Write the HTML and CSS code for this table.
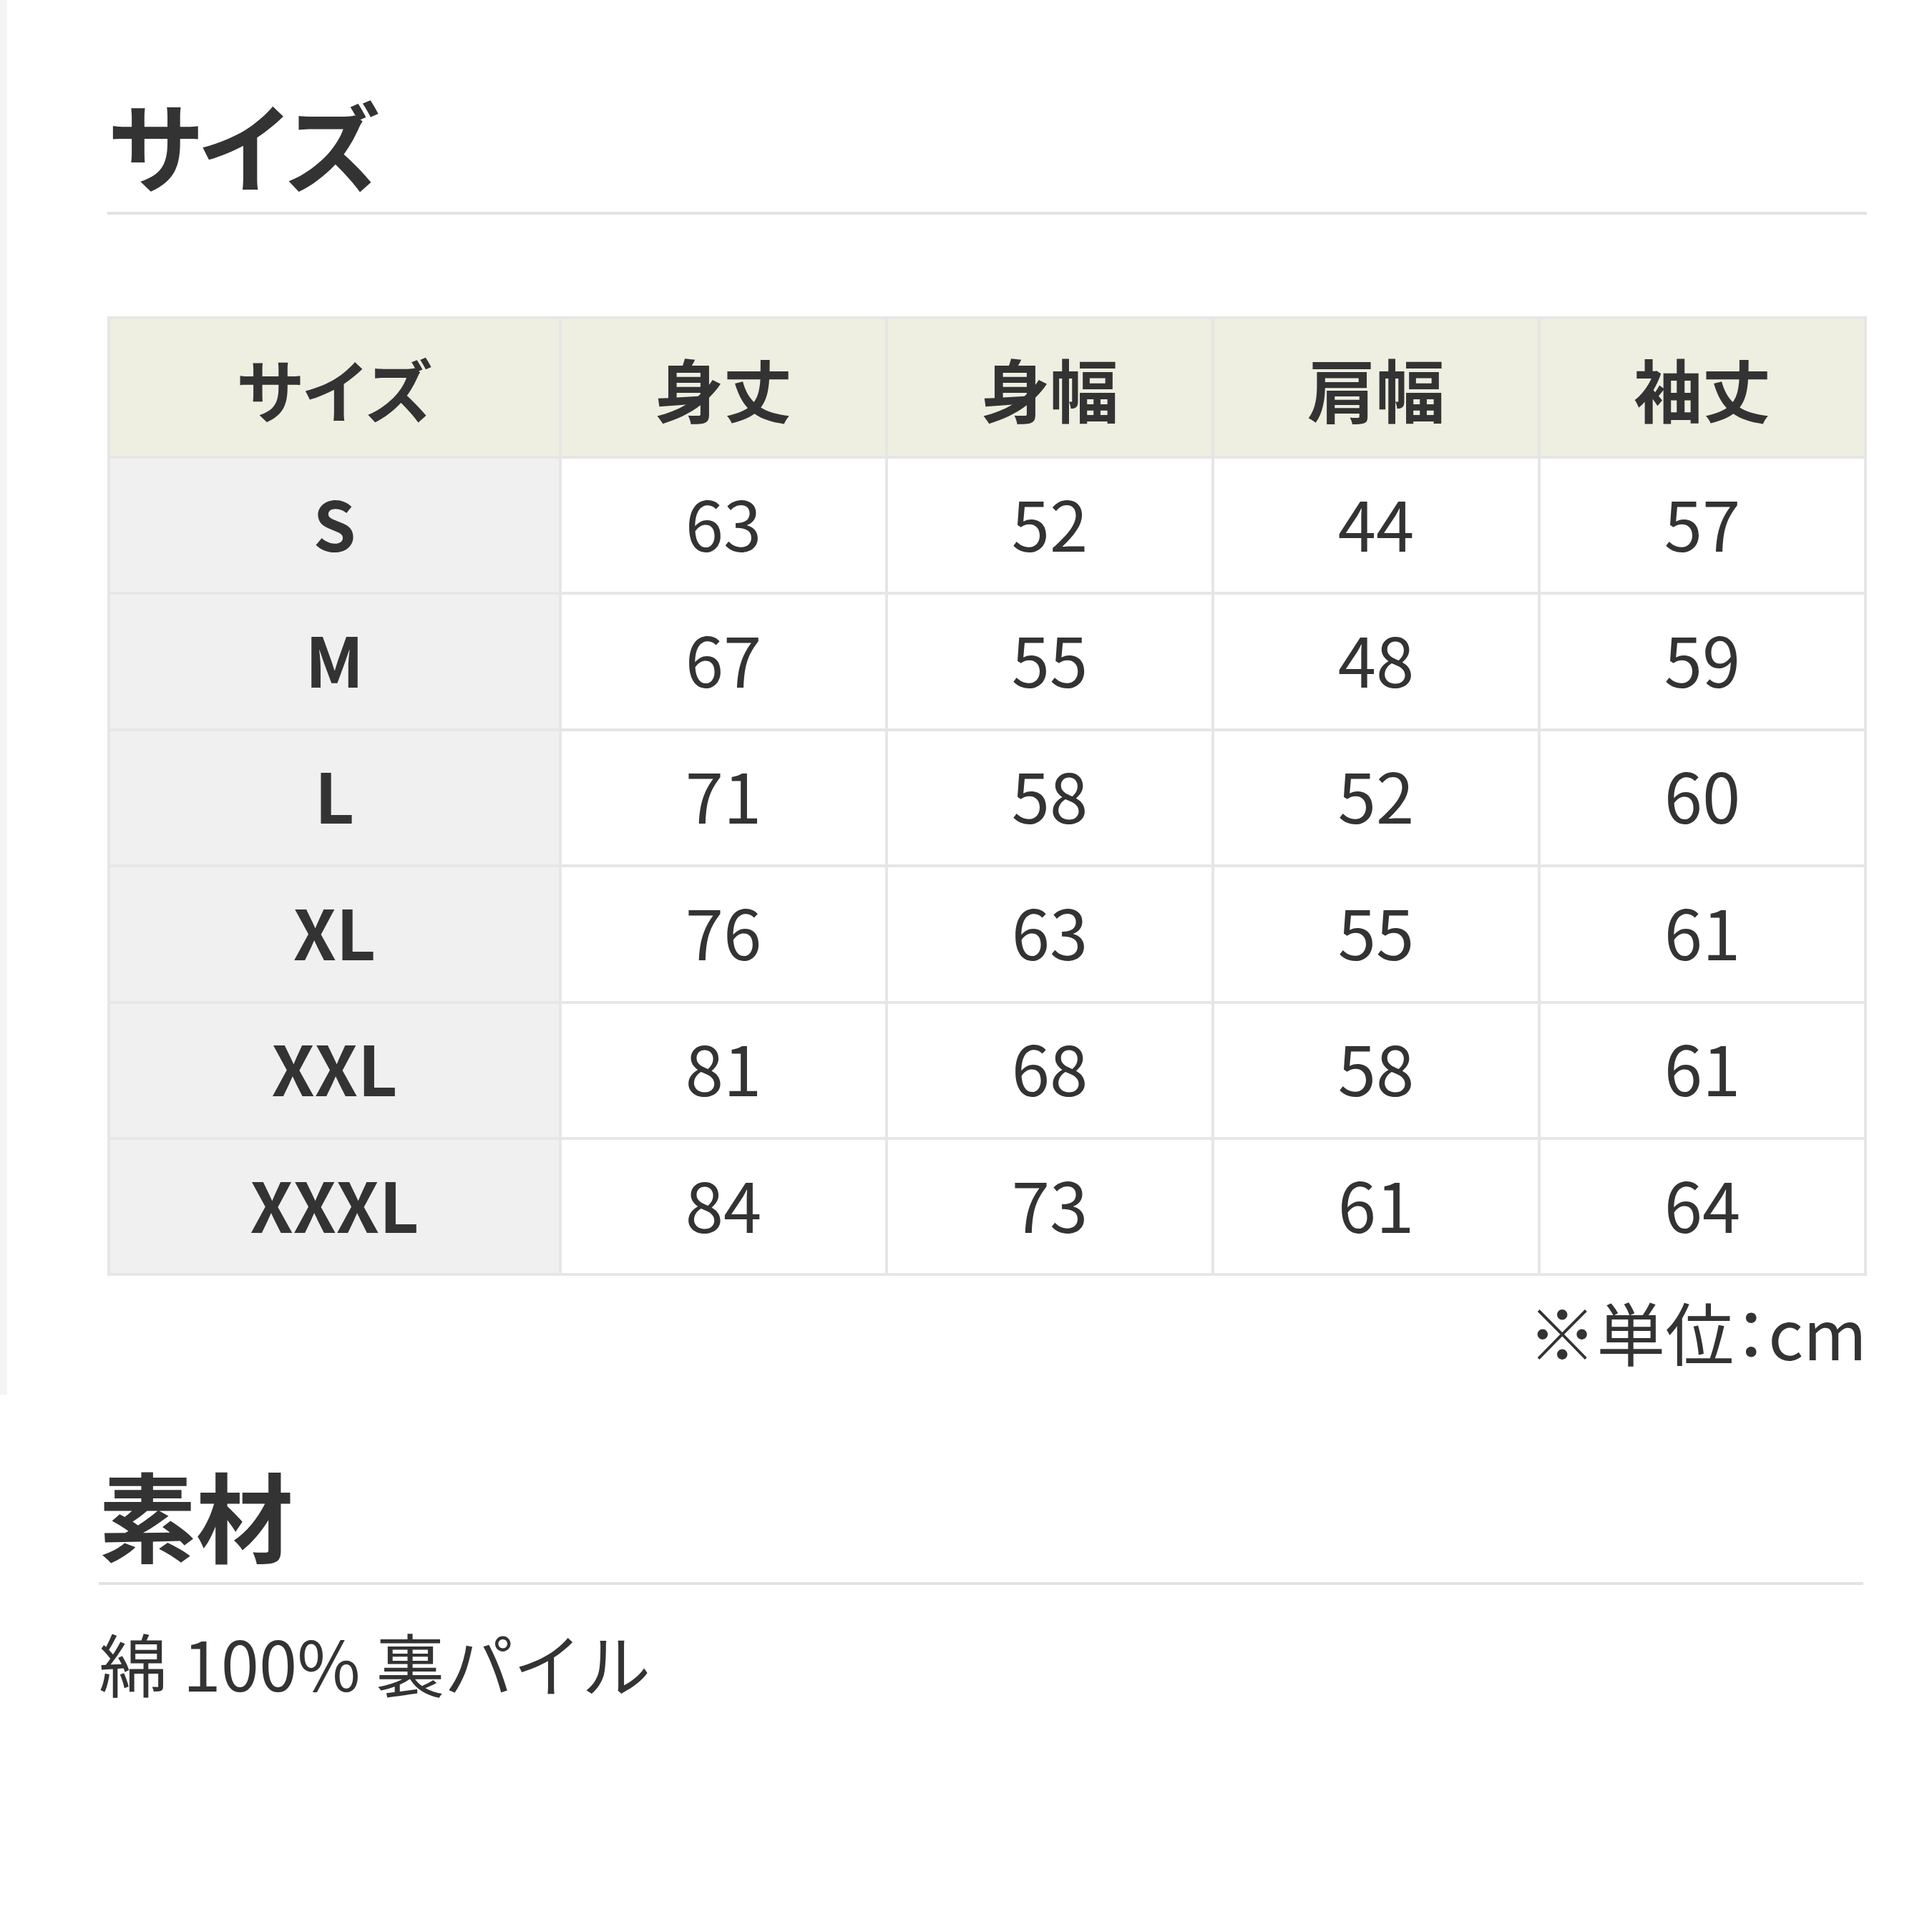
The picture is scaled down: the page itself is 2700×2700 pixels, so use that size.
FILE: index.html
```html
<!DOCTYPE html>
<html lang="ja">
<head>
<meta charset="utf-8">
<title>サイズ・素材</title>
<link rel="stylesheet" href="styles.css">
</head>
<body>
<main class="page">
  <section class="size-section">
    <h2 class="section-title kana-title">サイズ</h2>
    <table class="size-table">
      <colgroup>
        <col class="col-size">
        <col><col><col><col>
      </colgroup>
      <thead>
        <tr>
          <th class="kana-head">サイズ</th><th>身丈</th><th>身幅</th><th>肩幅</th><th>袖丈</th>
        </tr>
      </thead>
      <tbody>
        <tr><th>S</th><td>63</td><td>52</td><td>44</td><td>57</td></tr>
        <tr><th>M</th><td>67</td><td>55</td><td>48</td><td>59</td></tr>
        <tr><th>L</th><td>71</td><td>58</td><td>52</td><td>60</td></tr>
        <tr><th>XL</th><td>76</td><td>63</td><td>55</td><td>61</td></tr>
        <tr><th>XXL</th><td>81</td><td>68</td><td>58</td><td>61</td></tr>
        <tr><th>XXXL</th><td>84</td><td>73</td><td>61</td><td>64</td></tr>
      </tbody>
    </table>
    <p class="unit-note">※単位：cm</p>
  </section>
  <section class="material-section">
    <h2 class="section-title">素材</h2>
    <p class="material-text">綿 100% 裏パイル</p>
  </section>
</main>
</body>
</html>
```
FILE: styles.css
```css
html, body {
  margin: 0;
  padding: 0;
  background: #ffffff;
}

body {
  font-family: "Noto Sans CJK JP", "Noto Sans", sans-serif;
  color: #333333;
}

.page {
  width: 2700px;
}

.size-section {
  border-left: 10px solid #f4f4f4;
  padding: 117px 91px 22px 140px;
}

.section-title {
  margin: 0;
  font-size: 136px;
  line-height: 166px;
  font-weight: 700;
  padding-bottom: 13px;
  border-bottom: 4px solid #e2e2e2;
}

.kana-title {
  letter-spacing: -11px;
}

.size-table {
  margin-top: 142px;
  width: 2459px;
  table-layout: fixed;
  border-collapse: collapse;
  font-size: 96px;
}

.col-size {
  width: 631px;
}

.size-table th,
.size-table td {
  border: 4px solid #e6e6e6;
  padding: 0;
  text-align: center;
  vertical-align: middle;
  line-height: 1.2;
}

.size-table thead tr {
  height: 195px;
}

.size-table tbody tr {
  height: 190.4px;
}

.size-table thead th {
  background: #eeeee1;
  font-weight: 700;
}

.size-table thead th.kana-head {
  letter-spacing: -5px;
  text-indent: -5px;
}

.size-table tbody th,
.size-table tbody td {
  padding-bottom: 10px;
}

.size-table tbody th {
  background: #f0f0f0;
  font-weight: 700;
}

.size-table tbody td {
  background: #ffffff;
  font-weight: 400;
}

.unit-note {
  margin: 10px 0 0;
  text-align: right;
  font-size: 96px;
  line-height: 134px;
  font-feature-settings: "palt";
}

.material-section {
  padding: 83px 96px 0 138px;
}

.material-text {
  margin: 36px 0 0;
  font-size: 96px;
  line-height: 144px;
  font-weight: 400;
}
```
